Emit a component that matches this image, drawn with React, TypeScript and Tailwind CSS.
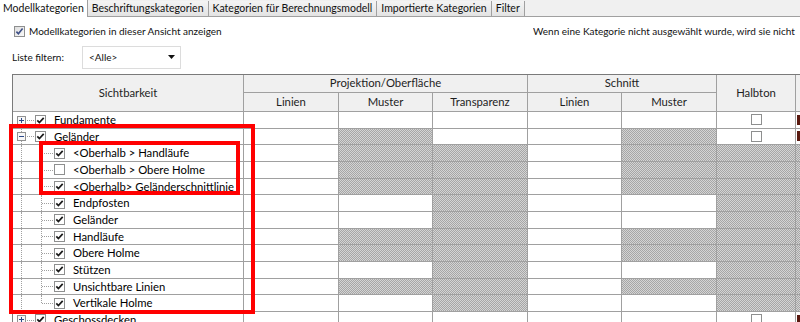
import React from "react";

type Row = {
  label: string;
  level: 0 | 1;
  expander?: "+" | "-";
  checked: boolean;
  muster: boolean;
  shaded: boolean; // Transparenz + Halbton + last column
  last?: boolean;
};

const rows: Row[] = [
  { label: "Fundamente", level: 0, expander: "+", checked: true, muster: false, shaded: false },
  { label: "Geländer", level: 0, expander: "-", checked: true, muster: true, shaded: false },
  { label: "<Oberhalb > Handläufe", level: 1, checked: true, muster: true, shaded: true },
  { label: "<Oberhalb > Obere Holme", level: 1, checked: false, muster: true, shaded: true },
  { label: "<Oberhalb> Geländerschnittlinie", level: 1, checked: true, muster: true, shaded: true },
  { label: "Endpfosten", level: 1, checked: true, muster: false, shaded: true },
  { label: "Geländer", level: 1, checked: true, muster: false, shaded: true },
  { label: "Handläufe", level: 1, checked: true, muster: true, shaded: true },
  { label: "Obere Holme", level: 1, checked: true, muster: true, shaded: true },
  { label: "Stützen", level: 1, checked: true, muster: false, shaded: true },
  { label: "Unsichtbare Linien", level: 1, checked: true, muster: true, shaded: true },
  { label: "Vertikale Holme", level: 1, checked: true, muster: false, shaded: true, last: true },
  { label: "Geschossdecken", level: 0, expander: "+", checked: true, muster: false, shaded: false },
];

const hatch =
  "bg-[#bdbdbd] bg-[image:repeating-conic-gradient(#a6a6a6_0_25%,#d4d4d4_0_50%)] bg-[length:2px_2px]";

const cols = "grid grid-cols-[231px_95px_94px_95px_94px_95px_79px_67px]";

const TreeCheck = ({ checked }: { checked: boolean }) => (
  <svg width="11" height="11" viewBox="0 0 11 11" className="block">
    <rect x="0.5" y="0.5" width="10" height="10" fill="#fff" stroke="#8e8f8f" />
    {checked && (
      <path d="M2.3 5.4 L4.4 7.6 L8.7 2.9" fill="none" stroke="#1a1a1a" strokeWidth="1.7" />
    )}
  </svg>
);

const Expander = ({ sign }: { sign: "+" | "-" }) => (
  <svg width="9" height="9" viewBox="0 0 9 9" className="block">
    <rect x="0.5" y="0.5" width="8" height="8" fill="#f7f7f7" stroke="#919191" />
    <path d="M2 4.5 H7" stroke="#2b4a8a" strokeWidth="1" />
    {sign === "+" && <path d="M4.5 2 V7" stroke="#2b4a8a" strokeWidth="1" />}
  </svg>
);

const TreeCell = ({ row, first }: { row: Row; first: boolean }) => (
  <div className="relative h-full overflow-hidden border-r border-b border-[#a0a0a0]">
    {/* main tree line */}
    <div
      className={`absolute left-[8px] bottom-0 border-l border-dotted border-[#a0a0a0] ${
        first ? "top-1/2" : "top-0"
      }`}
    />
    {row.level === 0 ? (
      <>
        <div className="absolute left-[9px] top-1/2 w-[12px] border-t border-dotted border-[#a0a0a0]" />
        <div className="absolute left-[4px] top-[3.5px]">
          <Expander sign={row.expander!} />
        </div>
        <div className="absolute left-[22px] top-[2.5px]">
          <TreeCheck checked={row.checked} />
        </div>
        <span className="absolute left-[41px] top-0 leading-[16px] text-[11.3px] text-black">
          {row.label}
        </span>
      </>
    ) : (
      <>
        <div
          className={`absolute left-[28px] top-0 border-l border-dotted border-[#a0a0a0] ${
            row.last ? "h-1/2" : "bottom-0"
          }`}
        />
        <div className="absolute left-[29px] top-1/2 w-[11px] border-t border-dotted border-[#a0a0a0]" />
        <div className="absolute left-[41px] top-[2.5px]">
          <TreeCheck checked={row.checked} />
        </div>
        <span className="absolute left-[60px] top-0 leading-[16px] text-[11.3px] text-black whitespace-nowrap">
          {row.label}
        </span>
      </>
    )}
  </div>
);

const Cell = ({ shaded, children }: { shaded?: boolean; children?: React.ReactNode }) => (
  <div
    className={`h-full border-r border-b border-[#a0a0a0] flex items-center justify-center ${
      shaded ? hatch : "bg-white"
    }`}
  >
    {children}
  </div>
);

const SmallBox = () => <div className="w-[11px] h-[11px] border border-[#8e8f8f] bg-white" />;

const Marker = () => <div className="ml-[1px] mr-auto w-[3px] h-[10px] bg-[#5a1a10]" />;

export default function App() {
  return (
    <div className="relative w-[800px] h-[322px] overflow-hidden bg-white text-[#111] font-['Lato','Liberation_Sans',sans-serif]">
      {/* TABS */}
      <div className="flex h-[17px] bg-[#f0f0f0] border-b border-[#a0a0a0] text-[10.5px]">
        <div className="h-[17px] bg-white px-[3px] leading-[16px] border-r border-[#a0a0a0] relative z-10 whitespace-nowrap">
          Modellkategorien
        </div>
        {[
          "Beschriftungskategorien",
          "Kategorien für Berechnungsmodell",
          "Importierte Kategorien",
          "Filter",
        ].map((t) => (
          <div
            key={t}
            className="mt-[1px] h-[15px] px-[4px] leading-[15px] whitespace-nowrap bg-gradient-to-b from-[#f4f4f4] to-[#e3e3e3] border-r border-l border-[#a0a0a0] -ml-px"
          >
            {t}
          </div>
        ))}
      </div>

      {/* SHOW TOGGLE + NOTE */}
      <div className="flex items-center h-[28px] text-[10px]">
        <div className="flex items-center pl-[14px] gap-[4px]">
          <svg width="11" height="11" viewBox="0 0 11 11">
            <defs>
              <linearGradient id="cb" x1="0" y1="0" x2="1" y2="1">
                <stop offset="0" stopColor="#dcdcdc" />
                <stop offset="1" stopColor="#fbfbfb" />
              </linearGradient>
            </defs>
            <rect x="0.5" y="0.5" width="10" height="10" fill="url(#cb)" stroke="#8e8f8f" />
            <path d="M2.4 5.6 L4.4 7.8 L8.6 2.6" fill="none" stroke="#3d4f86" strokeWidth="1.6" />
          </svg>
          <span>Modellkategorien in dieser Ansicht anzeigen</span>
        </div>
        <div className="ml-auto w-[267px] whitespace-nowrap overflow-hidden">
          Wenn eine Kategorie nicht ausgewählt wurde, wird sie nicht
        </div>
      </div>

      {/* FILTER */}
      <div className="flex items-center h-[24px] pl-[12px] text-[10px]">
        <span className="w-[70px]">Liste filtern:</span>
        <div className="w-[99px] h-[23px] border border-[#dcdcdc] bg-white flex items-center justify-between pl-[6px] pr-[5px]">
          <span>&lt;Alle&gt;</span>
          <svg width="7" height="4" viewBox="0 0 7 4">
            <path d="M0 0 H7 L3.5 4 Z" fill="#111" />
          </svg>
        </div>
      </div>

      {/* TABLE */}
      <div className="mt-[5px] ml-[12px] w-[850px] border-l border-t border-[#7a7a7a] text-[11.3px]">
        <div className={`${cols} grid-rows-[18px_19px] bg-[#f0f0f0] text-[#1e1e1e]`}>
          <div className="row-span-2 border-r border-b border-[#a0a0a0] flex items-center justify-center">
            Sichtbarkeit
          </div>
          <div className="col-span-3 border-r border-b border-[#a0a0a0] flex items-center justify-center">
            Projektion/Oberfläche
          </div>
          <div className="col-span-2 border-r border-b border-[#a0a0a0] flex items-center justify-center">
            Schnitt
          </div>
          <div className="row-span-2 border-r border-b border-[#a0a0a0] flex items-center justify-center">
            Halbton
          </div>
          <div className="row-span-2 border-b border-[#a0a0a0]" />
          {["Linien", "Muster", "Transparenz", "Linien", "Muster"].map((h, i) => (
            <div
              key={i}
              className="border-r border-b border-[#a0a0a0] flex items-center justify-center"
            >
              {h}
            </div>
          ))}
        </div>

        {rows.map((r, i) => (
          <div key={i} className={`${cols} h-[16.67px]`}>
            <TreeCell row={r} first={i === 0} />
            <Cell />
            <Cell shaded={r.muster} />
            <Cell shaded={r.shaded} />
            <Cell />
            <Cell shaded={r.muster} />
            <Cell shaded={r.shaded}>{!r.shaded && <SmallBox />}</Cell>
            <Cell shaded={r.shaded}>{!r.shaded && <Marker />}</Cell>
          </div>
        ))}
      </div>

      {/* RED HIGHLIGHTS */}
      <div className="absolute left-[9px] top-[124px] w-[246px] h-[190px] border-4 border-[#ff0000]" />
      <div className="absolute left-[39px] top-[141px] w-[201px] h-[54px] border-4 border-[#ff0000]" />
    </div>
  );
}
